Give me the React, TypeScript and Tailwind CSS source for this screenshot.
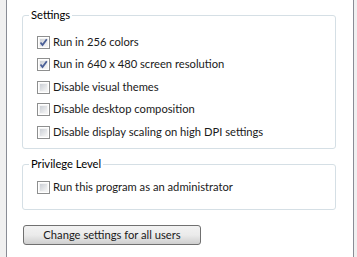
import React from "react";

function Check({ checked }: { checked?: boolean }) {
  return (
    <div className="relative w-[13px] h-[13px] border border-[#8e8f8f] bg-white shrink-0">
      <div className="absolute inset-[1px] bg-gradient-to-br from-[#cbcfd5] to-[#f6f6f6] border border-[#f4f4f4]" />
      {checked && (
        <svg className="absolute left-[1px] top-[1px]" width="9" height="9" viewBox="0 0 9 9">
          <path d="M1.5 4.5 L3.5 7 L7.8 1.2" fill="none" stroke="#4a5f97" strokeWidth="1.8" />
        </svg>
      )}
    </div>
  );
}

function Row({ label, checked }: { label: string; checked?: boolean }) {
  return (
    <div className="flex items-center h-[22.5px] gap-[3px]">
      <Check checked={checked} />
      <span>{label}</span>
    </div>
  );
}

function Group({ title, children, className }: { title: string; children: React.ReactNode; className?: string }) {
  return (
    <div className={"relative border border-[#d5dfe5] rounded-[3px] " + (className ?? "")}>
      <div className="absolute left-[6px] top-[-9px] bg-white px-[2px] leading-[16px] text-[#000]">{title}</div>
      {children}
    </div>
  );
}

export default function App() {
  return (
    <div
      className="w-[357px] h-[257px] bg-[#f0f0f0] text-[11.2px] text-[#1a1a1a] overflow-hidden"
      style={{ fontFamily: 'Lato, "Noto Sans", sans-serif' }}
    >
      <div className="ml-[6px] w-[348px] h-[257px] bg-white border-l border-r border-[#898c95] pl-[15px] pr-[17px] pt-[15px]">
        <Group title="Settings" className="h-[134px] pt-[15px] pl-[14px]">
          <Row label="Run in 256 colors" checked />
          <Row label="Run in 640 x 480 screen resolution" checked />
          <Row label="Disable visual themes" />
          <Row label="Disable desktop composition" />
          <Row label="Disable display scaling on high DPI settings" />
        </Group>
        <Group title="Privilege Level" className="mt-[15px] h-[46px] pt-[11px] pl-[14px]">
          <Row label="Run this program as an administrator" />
        </Group>
        <button className="mt-[15px] ml-[1px] w-[178px] h-[20px] border border-[#707070] rounded-[3px] bg-gradient-to-b from-[#f2f2f2] via-[#ebebeb] to-[#cfcfcf] text-[11.2px] leading-[18px] text-[#1a1a1a]">
          Change settings for all users
        </button>
      </div>
    </div>
  );
}
